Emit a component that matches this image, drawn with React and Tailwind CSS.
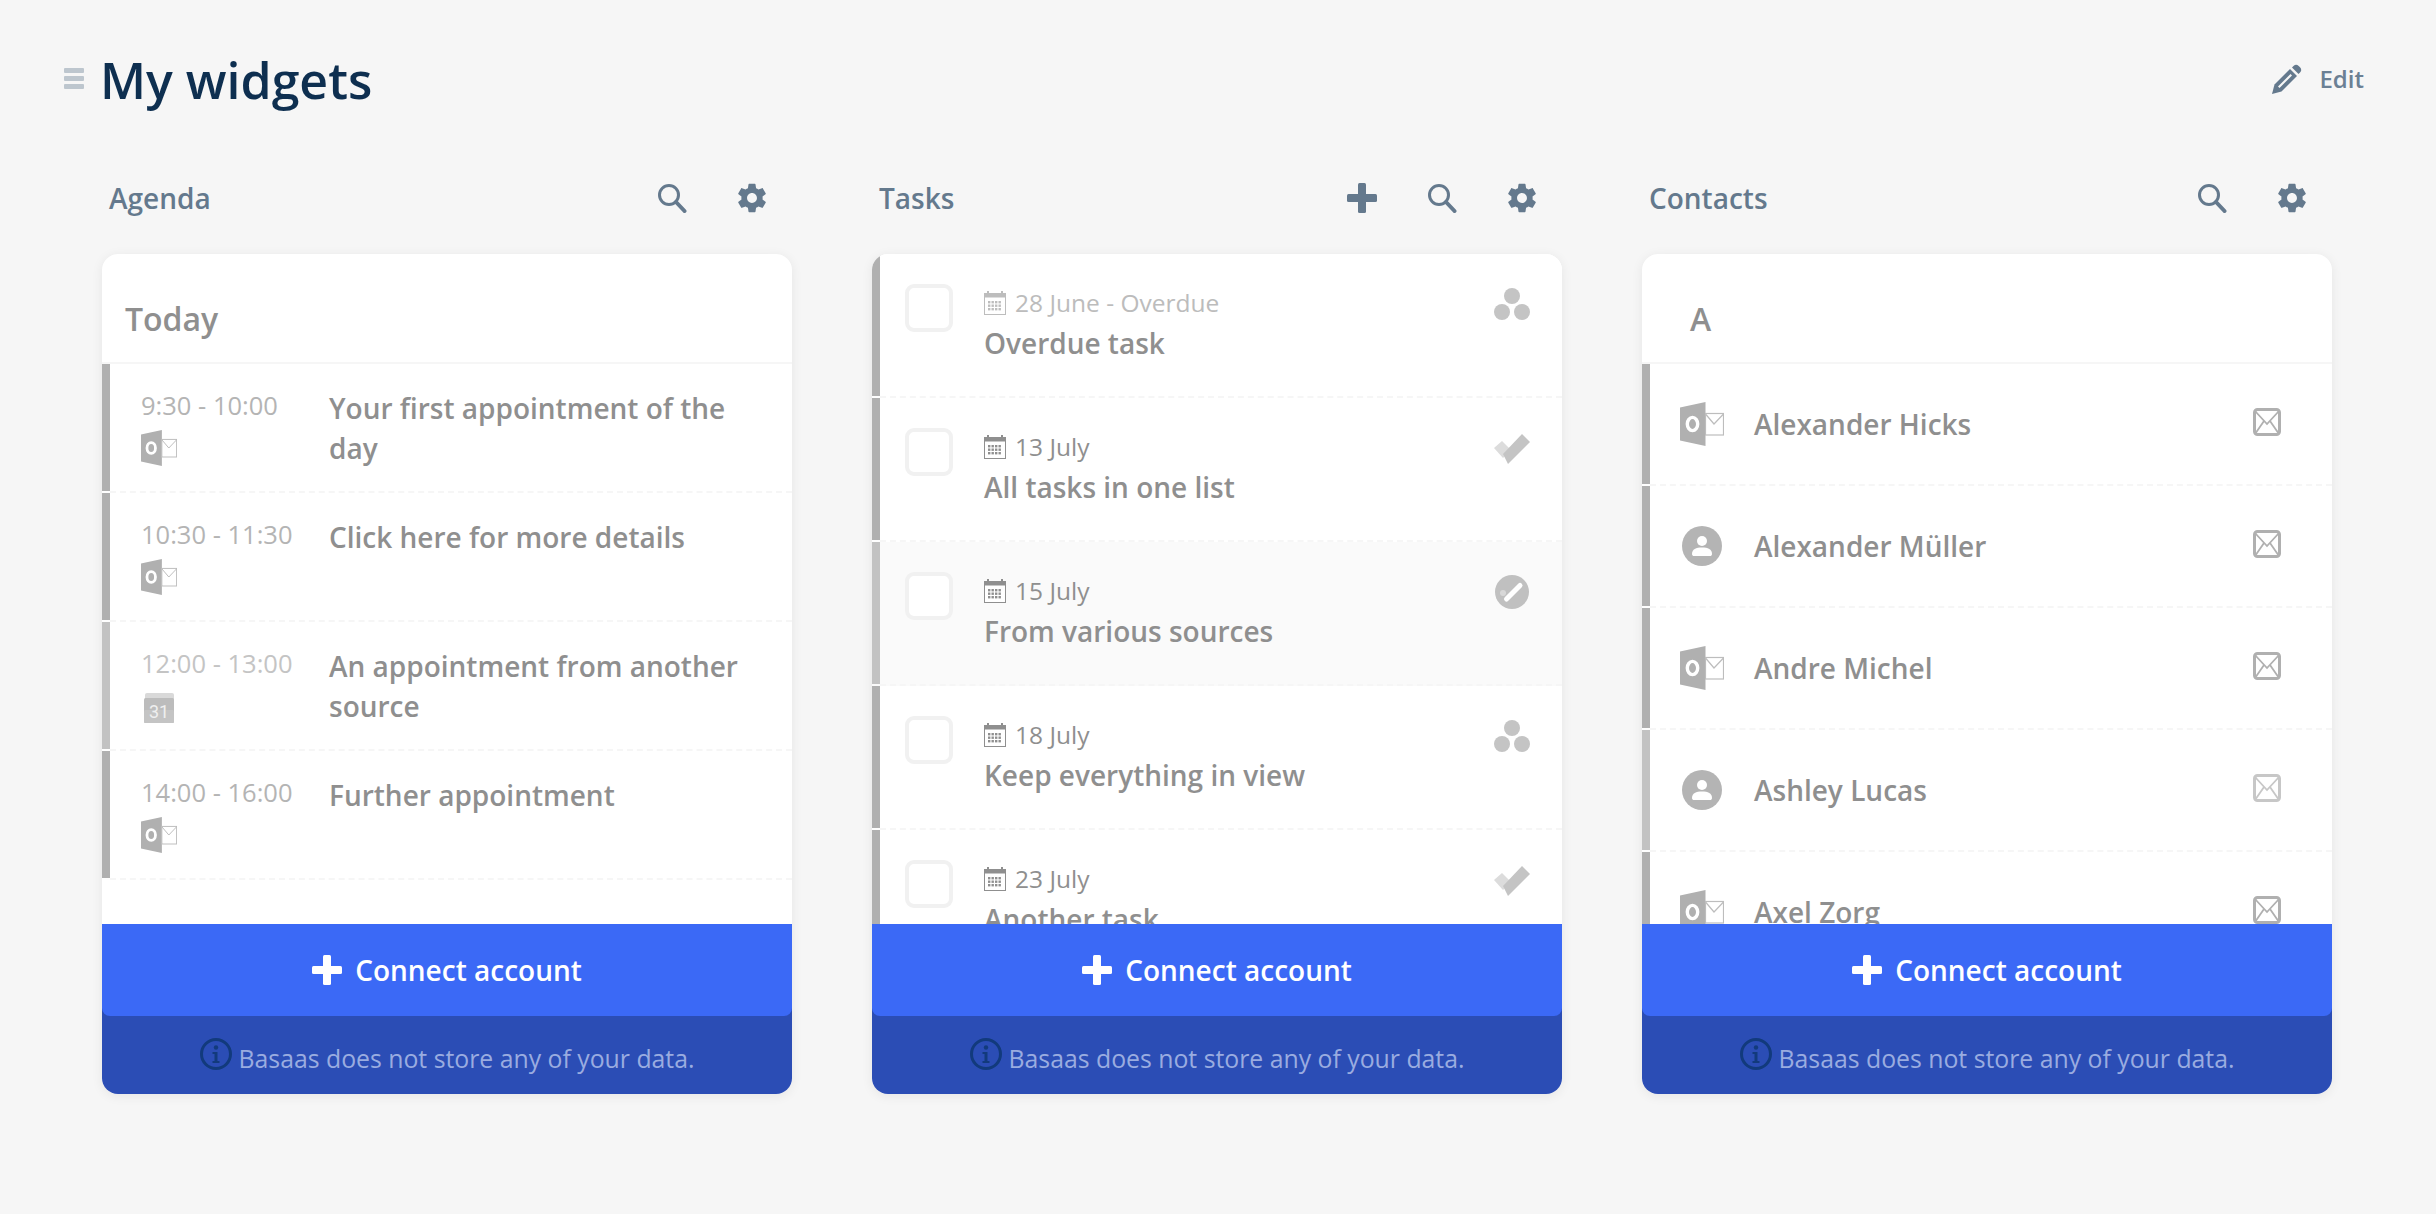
import React from "react";

const AGENDA = [
  { time: "9:30 - 10:00", title: "Your first appointment of the day", src: "outlook" },
  { time: "10:30 - 11:30", title: "Click here for more details", src: "outlook" },
  { time: "12:00 - 13:00", title: "An appointment from another source", src: "google", dim: true },
  { time: "14:00 - 16:00", title: "Further appointment", src: "outlook" },
];

const TASKS = [
  { date: "28 June - Overdue", title: "Overdue task", src: "dots", overdue: true },
  { date: "13 July", title: "All tasks in one list", src: "check" },
  { date: "15 July", title: "From various sources", src: "round", hover: true },
  { date: "18 July", title: "Keep everything in view", src: "dots" },
  { date: "23 July", title: "Another task", src: "check" },
];

const CONTACTS = [
  { name: "Alexander Hicks", src: "outlook" },
  { name: "Alexander Müller", src: "person" },
  { name: "Andre Michel", src: "outlook" },
  { name: "Ashley Lucas", src: "person", dim: true },
  { name: "Axel Zorg", src: "outlook" },
];

const SearchIcon = () => (
  <svg width="30" height="30" viewBox="0 0 30 30" fill="none" stroke="#64798d">
    <circle cx="12" cy="12" r="9.5" strokeWidth="3" />
    <path d="M19 19l8.5 9" strokeWidth="4" strokeLinecap="round" />
  </svg>
);

const GearIcon = () => (
  <svg width="34" height="34" viewBox="0 0 24 24" fill="#64798d">
    <path d="M19.43 12.98c.04-.32.07-.64.07-.98s-.03-.66-.07-.98l2.11-1.65c.19-.15.24-.42.12-.64l-2-3.46c-.12-.22-.39-.3-.61-.22l-2.49 1c-.52-.4-1.08-.73-1.69-.98l-.38-2.65A.488.488 0 0 0 14 2h-4c-.25 0-.46.18-.49.42l-.38 2.65c-.61.25-1.17.59-1.69.98l-2.49-1c-.23-.09-.49 0-.61.22l-2 3.46c-.13.22-.07.49.12.64l2.11 1.65c-.04.32-.07.65-.07.98s.03.66.07.98l-2.11 1.65c-.19.15-.24.42-.12.64l2 3.46c.12.22.39.3.61.22l2.49-1c.52.4 1.08.73 1.69.98l.38 2.65c.03.24.24.42.49.42h4c.25 0 .46-.18.49-.42l.38-2.65c.61-.25 1.17-.59 1.69-.98l2.49 1c.23.09.49 0 .61-.22l2-3.46c.12-.22.07-.49-.12-.64l-2.11-1.65zM12 15.5c-1.93 0-3.5-1.57-3.5-3.5s1.57-3.5 3.5-3.5 3.5 1.57 3.5 3.5-1.57 3.5-3.5 3.5z" />
  </svg>
);

const PlusIcon = ({ color = "#64798d" }) => (
  <svg width="30" height="30" viewBox="0 0 30 30" fill={color}>
    <rect x="11" y="0" width="8" height="30" rx="1.5" />
    <rect x="0" y="11" width="30" height="8" rx="1.5" />
  </svg>
);

const PencilIcon = () => (
  <svg width="30" height="30" viewBox="0 0 30 30">
    <path d="M0 30l2.500-9.500L18 5l7 7L9.500 27.500z" fill="#64798d" />
    <path d="M6 22.500L18.500 10l1.500 1.500L7.500 24z" fill="#f6f6f6" />
    <path d="M20 3.500l1.500-1.500a3.800 3.800 0 0 1 5.200 0l1.300 1.300a3.800 3.800 0 0 1 0 5.200L26.500 10z" fill="#64798d" />
  </svg>
);

const InfoIcon = () => (
  <svg width="32" height="32" viewBox="0 0 32 32" fill="none">
    <circle cx="16" cy="16" r="14.500" stroke="#123a7c" strokeWidth="3" />
    <circle cx="16" cy="9.500" r="2.200" fill="#123a7c" />
    <path d="M12.500 14h5v9h2v2h-7v-2h2v-7h-2z" fill="#123a7c" />
  </svg>
);

const OutlookIcon = ({ size = 36 }) => (
  <svg width={size} height={size} viewBox="0 0 44 44">
    <path d="M0 5.500L25.500 0v44L0 38.500z" fill="#b0b0b0" />
    <ellipse cx="12.500" cy="22" rx="5.200" ry="6.600" fill="none" stroke="#fff" strokeWidth="3.400" />
    <rect x="25.500" y="11.500" width="18" height="21.500" fill="#fff" stroke="#bdbdbd" strokeWidth="1.200" />
    <path d="M25.500 12l8.500 10 9.500-10" fill="none" stroke="#bdbdbd" strokeWidth="1.200" />
  </svg>
);

const GoogleCalIcon = () => (
  <svg width="36" height="36" viewBox="0 0 36 36">
    <rect x="4" y="5" width="29" height="8" rx="2" fill="#d9d9d9" />
    <rect x="3" y="10" width="30" height="25" rx="1.500" fill="#bcbcbc" />
    <rect x="3" y="22" width="30" height="13" rx="1.500" fill="#c4c4c4" />
    <text x="18" y="30" textAnchor="middle" fontSize="18" fontFamily="Roboto, sans-serif" fill="#efefef">31</text>
  </svg>
);

const PersonIcon = () => (
  <svg width="40" height="40" viewBox="0 0 40 40">
    <circle cx="20" cy="20" r="20" fill="#b4b4b4" />
    <circle cx="20" cy="15" r="5" fill="#fff" />
    <path d="M10 28c0-5 4-6.500 10-6.500S30 23 30 28c0 1.500-1 2-2 2H12c-1 0-2-.5-2-2z" fill="#fff" />
  </svg>
);

const MailIcon = () => (
  <svg width="28" height="28" viewBox="0 0 28 28" fill="none" stroke="#b0b0b0">
    <rect x="1.500" y="1.500" width="25" height="25" rx="3" strokeWidth="3" />
    <path d="M2 3l12 13L26 3M2 26l9-13M26 26l-9-13" strokeWidth="1.800" />
  </svg>
);

const SmallCalendar = ({ faded }) => {
  const c = faded ? "#bdbdbd" : "#8f8f8f";
  return (
    <svg width="22" height="24" viewBox="0 0 22 24" className="shrink-0">
      <path d="M0 2h3V0h2v2h12V0h2v2h3v6H0z" fill={c} />
      <rect x="0.500" y="6" width="21" height="17.500" fill="#fff" stroke={c} />
      {[10, 13.5, 17].map((y) =>
        [4, 7.5, 11, 14.5].map((x) => (
          <rect key={`${x}-${y}`} x={x} y={y} width="2.400" height="2.400" fill={c} />
        ))
      )}
    </svg>
  );
};

const DotsIcon = () => (
  <svg width="36" height="36" viewBox="0 0 36 36" fill="#c4c4c4">
    <circle cx="18" cy="10" r="8" />
    <circle cx="8" cy="26" r="8" />
    <circle cx="28" cy="26" r="8" />
  </svg>
);

const CheckIcon = () => (
  <svg width="36" height="36" viewBox="0 0 36 36">
    <path d="M0 18l8-7 9 9-8 8z" fill="#dcdcdc" />
    <path d="M9 24L28 4l8 8-22 22z" fill="#c4c4c4" />
  </svg>
);

const RoundIcon = () => (
  <svg width="36" height="36" viewBox="0 0 36 36">
    <circle cx="18" cy="18" r="17" fill="#c0c0c0" />
    <circle cx="9" cy="19" r="3" fill="#d8d8d8" />
    <path d="M12.500 25L26 11.500" stroke="#fff" strokeWidth="5" strokeLinecap="round" />
  </svg>
);

const TASK_ICONS = { dots: DotsIcon, check: CheckIcon, round: RoundIcon };

// colour bar + dashed divider shared by all three lists
const Row = ({ dim, hover, height, children }) => (
  <div className={`flex shrink-0 ${height} ${hover ? "bg-[#fafafa]" : "bg-white"}`}>
    <div className={`w-2 mb-[2px] shrink-0 ${dim ? "bg-[#c2c2c2]" : "bg-[#b0b0b0]"}`} />
    <div className="flex-1 min-w-0 flex border-b-2 border-dashed border-[#f6f6f6]">{children}</div>
  </div>
);

const SectionHeader = ({ label, className }) => (
  <div className="h-[110px] shrink-0 border-b-2 border-[#f6f6f6] flex items-center pt-[22px]">
    <span className={`text-[32px] leading-10 font-semibold text-[#8f8f8f] ${className}`}>{label}</span>
  </div>
);

const AgendaList = () => (
  <>
    <SectionHeader label="Today" className="pl-[23px]" />
    {AGENDA.map((a) => (
      <Row key={a.time} dim={a.dim} height="h-[129px]">
        <div className="w-[219px] shrink-0 pl-[31px] pt-[24px]">
          <div className={`text-[25.5px] leading-[34px] ${a.dim ? "text-[#c4c4c4]" : "text-[#b4b4b4]"}`}>{a.time}</div>
          <div className="mt-[8px]">{a.src === "google" ? <GoogleCalIcon /> : <OutlookIcon />}</div>
        </div>
        <div className="flex-1 pt-6 pr-8 text-[28px] leading-10 font-semibold text-[#8f8f8f]">{a.title}</div>
      </Row>
    ))}
  </>
);

const TaskList = () => (
  <>
    {TASKS.map((t) => {
      const Icon = TASK_ICONS[t.src];
      return (
        <Row key={t.title} dim={t.hover} hover={t.hover} height="h-[144px]">
          <div className="w-[48px] h-[48px] ml-[25px] mt-[30px] shrink-0 rounded-[9px] border-4 border-[#f1f1f1] bg-white" />
          <div className="flex-1 ml-[31px] pt-[33px]">
            <div className="flex items-center gap-[9px] h-[32px]">
              <SmallCalendar faded={t.overdue} />
              <span className={`text-[24.5px] leading-8 font-medium ${t.overdue ? "text-[#bcbcbc]" : "text-[#8f8f8f]"}`}>{t.date}</span>
            </div>
            <div className="mt-[4px] text-[28px] leading-10 font-semibold text-[#8f8f8f]">{t.title}</div>
          </div>
          <div className="w-9 mt-[32px] mr-[32px] shrink-0"><Icon /></div>
        </Row>
      );
    })}
  </>
);

const ContactList = () => (
  <>
    <SectionHeader label="A" className="pl-[48px]" />
    {CONTACTS.map((c) => (
      <Row key={c.name} dim={c.dim} height="h-[122px]">
        <div className="flex-1 flex items-center">
          <div className="w-[44px] ml-[30px] shrink-0 flex justify-center">
            {c.src === "person" ? <PersonIcon /> : <OutlookIcon size={44} />}
          </div>
          <div className="flex-1 ml-[30px] text-[28px] leading-10 font-semibold text-[#8f8f8f]">{c.name}</div>
          <div className={`mr-[51px] -mt-[5px] shrink-0 ${c.dim ? "opacity-70" : ""}`}><MailIcon /></div>
        </div>
      </Row>
    ))}
  </>
);

const Widget = ({ title, canAdd, children }) => (
  <section>
    <div className="flex items-center h-[58px] mb-[27px] pl-[7px]">
      <h2 className="flex-1 text-[28px] font-semibold text-[#64798d]">{title}</h2>
      {canAdd && <button className="w-20 flex justify-center"><PlusIcon /></button>}
      <button className="w-20 flex justify-center"><SearchIcon /></button>
      <button className="w-20 flex justify-center"><GearIcon /></button>
    </div>
    <div className="h-[840px] rounded-[16px] overflow-hidden bg-white flex flex-col shadow-[0_2px_12px_rgba(0,0,0,0.07)]">
      <div className="flex-1 min-h-0 overflow-hidden flex flex-col">{children}</div>
      <div className="shrink-0 bg-[#2b4db5]">
        <button className="w-full h-[92px] rounded-b-[8px] bg-[#3b69f6] flex items-center justify-center gap-[13px] text-[28px] font-semibold text-white">
          <PlusIcon color="#ffffff" />
          Connect account
        </button>
        <div className="h-[78px] flex items-center justify-center gap-[7px] text-[24.8px] font-medium text-[#9aace0]">
          <span className="-mt-[2px]"><InfoIcon /></span>
          <span className="mt-[8px]">Basaas does not store any of your data.</span>
        </div>
      </div>
    </div>
  </section>
);

export default function App() {
  return (
    <div className="min-h-screen bg-[#f6f6f6] font-['Open_Sans',sans-serif] pt-[48px]">
      <header className="flex items-center h-[64px] pl-[64px] pr-[72px]">
        <div className="w-5 flex flex-col gap-[3px] mr-[16px] -mt-[3px]">
          <div className="h-[5px] rounded-[1px] bg-[#bdc6ce]" />
          <div className="h-[5px] rounded-[1px] bg-[#bdc6ce]" />
          <div className="h-[5px] rounded-[1px] bg-[#bdc6ce]" />
        </div>
        <h1 className="flex-1 text-[50px] font-semibold text-[#0e2f50]">My widgets</h1>
        <button className="flex items-center gap-[17px] text-[24px] font-semibold text-[#6b8094] -mt-[2px]">
          <PencilIcon />
          Edit
        </button>
      </header>
      <main className="grid grid-cols-[690px_690px_690px] gap-x-[80px] pl-[102px] mt-[57px]">
        <Widget title="Agenda"><AgendaList /></Widget>
        <Widget title="Tasks" canAdd><TaskList /></Widget>
        <Widget title="Contacts"><ContactList /></Widget>
      </main>
    </div>
  );
}
